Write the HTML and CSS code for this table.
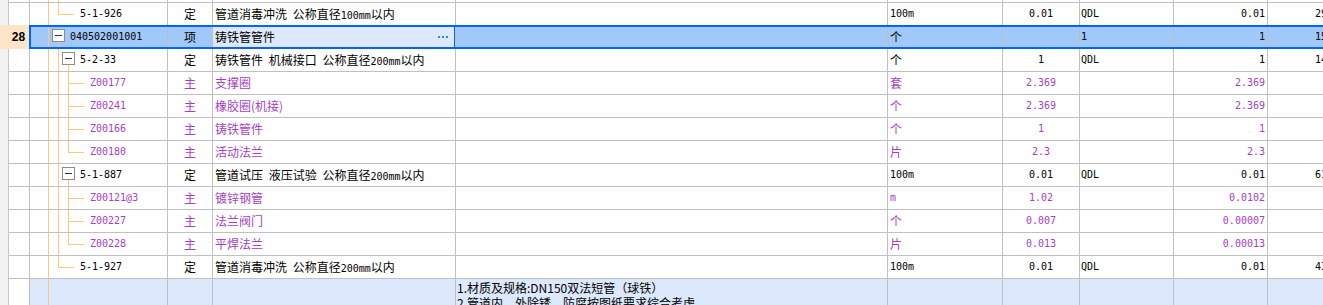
FILE: index.html
```html
<!DOCTYPE html>
<html lang="zh">
<head>
<meta charset="utf-8">
<title>清单</title>
<link rel="stylesheet" href="styles.css">
</head>
<body>
<div class="sheet">
  <div class="row">
    <div class="hdr"></div>
    <div class="c code t-v12"></div>
    <div class="c"></div><div class="c"></div><div class="c"></div><div class="c"></div>
    <div class="c"></div><div class="c"></div><div class="c"></div><div class="c"></div>
  </div>

  <div class="row">
    <div class="hdr"></div>
    <div class="c code t-l2e lv2"><span class="m">5-1-926</span></div>
    <div class="c type">定</div>
    <div class="c name">管道消毒冲洗 公称直径<span class="m">100mm</span>以内</div>
    <div class="c feat"></div>
    <div class="c unit m">100m</div>
    <div class="c expr m">0.01</div>
    <div class="c qdl m">QDL</div>
    <div class="c qty m">0.01</div>
    <div class="c price m">2961.39</div>
  </div>

  <div class="row sel">
    <div class="hdr">28</div>
    <div class="c code t-n1 lv1"><span class="box"></span><span class="m">040502001001</span></div>
    <div class="c type">项</div>
    <div class="c name edit"><span>铸铁管管件</span><svg class="dots" width="10" height="2" viewBox="0 0 10 2"><rect x="0" y="0" width="2" height="2"/><rect x="4" y="0" width="2" height="2"/><rect x="8" y="0" width="2" height="2"/></svg></div>
    <div class="c feat"></div>
    <div class="c unit">个</div>
    <div class="c expr m"></div>
    <div class="c qdl m">1</div>
    <div class="c qty m">1</div>
    <div class="c price m">1562.80</div>
  </div>

  <div class="row">
    <div class="hdr"></div>
    <div class="c code t-n2 lv2b"><span class="box"></span><span class="m">5-2-33</span></div>
    <div class="c type">定</div>
    <div class="c name">铸铁管件 机械接口 公称直径<span class="m">200mm</span>以内</div>
    <div class="c feat"></div>
    <div class="c unit">个</div>
    <div class="c expr m">1</div>
    <div class="c qdl m">QDL</div>
    <div class="c qty m">1</div>
    <div class="c price m">1462.11</div>
  </div>

  <div class="row p">
    <div class="hdr"></div>
    <div class="c code t-l3 lv3"><span class="m">Z00177</span></div>
    <div class="c type">主</div>
    <div class="c name">支撑圈</div>
    <div class="c feat"></div>
    <div class="c unit">套</div>
    <div class="c expr m">2.369</div>
    <div class="c qdl"></div>
    <div class="c qty m">2.369</div>
    <div class="c price"></div>
  </div>

  <div class="row p">
    <div class="hdr"></div>
    <div class="c code t-l3 lv3"><span class="m">Z00241</span></div>
    <div class="c type">主</div>
    <div class="c name">橡胶圈(机接)</div>
    <div class="c feat"></div>
    <div class="c unit">个</div>
    <div class="c expr m">2.369</div>
    <div class="c qdl"></div>
    <div class="c qty m">2.369</div>
    <div class="c price"></div>
  </div>

  <div class="row p">
    <div class="hdr"></div>
    <div class="c code t-l3 lv3"><span class="m">Z00166</span></div>
    <div class="c type">主</div>
    <div class="c name">铸铁管件</div>
    <div class="c feat"></div>
    <div class="c unit">个</div>
    <div class="c expr m">1</div>
    <div class="c qdl"></div>
    <div class="c qty m">1</div>
    <div class="c price"></div>
  </div>

  <div class="row p">
    <div class="hdr"></div>
    <div class="c code t-l3e lv3"><span class="m">Z00180</span></div>
    <div class="c type">主</div>
    <div class="c name">活动法兰</div>
    <div class="c feat"></div>
    <div class="c unit">片</div>
    <div class="c expr m">2.3</div>
    <div class="c qdl"></div>
    <div class="c qty m">2.3</div>
    <div class="c price"></div>
  </div>

  <div class="row">
    <div class="hdr"></div>
    <div class="c code t-n2 lv2b"><span class="box"></span><span class="m">5-1-887</span></div>
    <div class="c type">定</div>
    <div class="c name">管道试压 液压试验 公称直径<span class="m">200mm</span>以内</div>
    <div class="c feat"></div>
    <div class="c unit m">100m</div>
    <div class="c expr m">0.01</div>
    <div class="c qdl m">QDL</div>
    <div class="c qty m">0.01</div>
    <div class="c price m">61.25</div>
  </div>

  <div class="row p">
    <div class="hdr"></div>
    <div class="c code t-l3 lv3"><span class="m">Z00121@3</span></div>
    <div class="c type">主</div>
    <div class="c name">镀锌钢管</div>
    <div class="c feat"></div>
    <div class="c unit m">m</div>
    <div class="c expr m">1.02</div>
    <div class="c qdl"></div>
    <div class="c qty m">0.0102</div>
    <div class="c price"></div>
  </div>

  <div class="row p">
    <div class="hdr"></div>
    <div class="c code t-l3 lv3"><span class="m">Z00227</span></div>
    <div class="c type">主</div>
    <div class="c name">法兰阀门</div>
    <div class="c feat"></div>
    <div class="c unit">个</div>
    <div class="c expr m">0.007</div>
    <div class="c qdl"></div>
    <div class="c qty m">0.00007</div>
    <div class="c price"></div>
  </div>

  <div class="row p">
    <div class="hdr"></div>
    <div class="c code t-l3e lv3"><span class="m">Z00228</span></div>
    <div class="c type">主</div>
    <div class="c name">平焊法兰</div>
    <div class="c feat"></div>
    <div class="c unit">片</div>
    <div class="c expr m">0.013</div>
    <div class="c qdl"></div>
    <div class="c qty m">0.00013</div>
    <div class="c price"></div>
  </div>

  <div class="row">
    <div class="hdr"></div>
    <div class="c code t-l2e lv2"><span class="m">5-1-927</span></div>
    <div class="c type">定</div>
    <div class="c name">管道消毒冲洗 公称直径<span class="m">200mm</span>以内</div>
    <div class="c feat"></div>
    <div class="c unit m">100m</div>
    <div class="c expr m">0.01</div>
    <div class="c qdl m">QDL</div>
    <div class="c qty m">0.01</div>
    <div class="c price m">4317.50</div>
  </div>

  <div class="row tall">
    <div class="hdr"></div>
    <div class="c code t-v1"></div>
    <div class="c type"></div>
    <div class="c name"></div>
    <div class="c feat multi">1.材质及规格:DN150双法短管（球铁）<br>2.管道内、外除锈、防腐按图纸要求综合考虑</div>
    <div class="c unit"></div>
    <div class="c expr"></div>
    <div class="c qdl"></div>
    <div class="c qty"></div>
    <div class="c price"></div>
  </div>
</div>
</body>
</html>
```

FILE: styles.css
```css
html, body {
  margin: 0;
  padding: 0;
  background: #ffffff;
  overflow: hidden;
}
body {
  width: 1323px;
  height: 305px;
  font-family: "Noto Sans CJK SC", sans-serif;
  font-size: 12px;
  color: #000;
}
* { box-sizing: border-box; }

.sheet {
  margin-top: -20px;
  width: 1368px;
  --tl: #ffc978;
  --grid: #c0c0c0;
}

.row {
  display: grid;
  grid-template-columns: 30px 138px 45px 243px 432px 115px 77px 94px 94px 100px;
  height: 23px;
}
.row.tall { height: 48px; background: #dce8fc; }

.c {
  border-right: 1px solid var(--grid);
  border-bottom: 1px solid var(--grid);
  line-height: 22px;
  white-space: nowrap;
  overflow: hidden;
}

.hdr {
  border-right: 1px solid var(--grid);
  background:
    linear-gradient(var(--grid), var(--grid)) 9px 100% / 100% 1px no-repeat,
    linear-gradient(to right, #f2f2f2 8px, #c8c8c8 8px 9px, #ffffff 9px);
}
.tall .hdr {
  background: linear-gradient(to right, #f2f2f2 8px, #c8c8c8 8px 9px, #ffffff 9px);
}

.m {
  font-family: "DejaVu Sans Mono", "Noto Sans CJK SC", monospace;
  font-size: 10px;
}

.p { color: #a43fc2; }

/* code column with tree */
.code { display: flex; align-items: flex-start; }
.lv1 { padding-left: 22px; }
.lv2 { padding-left: 50px; }
.lv2b { padding-left: 32px; }
.lv3 { padding-left: 60px; }
.code .m { line-height: 22px; }

.box {
  flex: none;
  width: 13px;
  height: 13px;
  margin-top: 3px;
  margin-right: 5px;
  border: 1px solid #8c8c8c;
  background: #fff;
  display: flex;
  align-items: center;
  justify-content: center;
}
.box::before {
  content: "";
  width: 7px;
  height: 1px;
  background: #333;
}

.t-v12 {
  background:
    linear-gradient(var(--tl), var(--tl)) 18px 0 / 1px 100% no-repeat,
    linear-gradient(var(--tl), var(--tl)) 28px 0 / 1px 100% no-repeat;
}
.t-v1 {
  background: linear-gradient(var(--tl), var(--tl)) 18px 0 / 1px 100% no-repeat;
}
.t-l2e {
  background:
    linear-gradient(var(--tl), var(--tl)) 18px 0 / 1px 100% no-repeat,
    linear-gradient(var(--tl), var(--tl)) 28px 0 / 1px 12px no-repeat,
    linear-gradient(var(--tl), var(--tl)) 28px 11px / 16px 1px no-repeat;
}
.t-n1 {
  background:
    linear-gradient(var(--tl), var(--tl)) 18px 0 / 1px 100% no-repeat,
    linear-gradient(var(--tl), var(--tl)) 28px 16px / 1px 100% no-repeat;
}
.t-n2 {
  background:
    linear-gradient(var(--tl), var(--tl)) 18px 0 / 1px 100% no-repeat,
    linear-gradient(var(--tl), var(--tl)) 28px 0 / 1px 100% no-repeat,
    linear-gradient(var(--tl), var(--tl)) 38px 16px / 1px 100% no-repeat;
}
.t-l3 {
  background:
    linear-gradient(var(--tl), var(--tl)) 18px 0 / 1px 100% no-repeat,
    linear-gradient(var(--tl), var(--tl)) 28px 0 / 1px 100% no-repeat,
    linear-gradient(var(--tl), var(--tl)) 38px 0 / 1px 100% no-repeat,
    linear-gradient(var(--tl), var(--tl)) 38px 11px / 16px 1px no-repeat;
}
.t-l3e {
  background:
    linear-gradient(var(--tl), var(--tl)) 18px 0 / 1px 100% no-repeat,
    linear-gradient(var(--tl), var(--tl)) 28px 0 / 1px 100% no-repeat,
    linear-gradient(var(--tl), var(--tl)) 38px 0 / 1px 12px no-repeat,
    linear-gradient(var(--tl), var(--tl)) 38px 11px / 16px 1px no-repeat;
}

.type { text-align: center; }
.name { padding-left: 2px; word-spacing: 3px; }
.feat { padding-left: 1px; }
.unit { padding-left: 2px; }
.expr { text-align: center; }
.qdl { padding-left: 1px; }
.qty { text-align: right; padding-right: 2px; }
.price { padding-left: 47px; border-right: none; }

.feat.multi {
  white-space: nowrap;
  line-height: 15px;
  padding-top: 1px;
}

/* selected row */
.row.sel {
  position: relative;
  background: #a0c8f8;
}
.row.sel::after {
  content: "";
  position: absolute;
  left: 29px;
  right: -20px;
  top: -1px;
  bottom: 0;
  border: 2px solid #0064ff;
  pointer-events: none;
}
.sel .hdr {
  background: #fde6c8;
  box-shadow: 0 -1px 0 #fde6c8;
  font-family: "Liberation Sans", sans-serif;
  font-weight: bold;
  font-size: 12px;
  line-height: 22px;
  padding-left: 8px;
  text-align: center;
}
.edit {
  position: relative;
  background: #dde9fb;
  display: flex;
  align-items: center;
  justify-content: space-between;
  padding-right: 7px;
}
.edit::after {
  content: "";
  position: absolute;
  left: -2px;
  right: -1px;
  top: -1px;
  bottom: -1px;
  border: 2px solid #0064ff;
  pointer-events: none;
}
.dots { fill: #3a87d0; flex: none; }
```
